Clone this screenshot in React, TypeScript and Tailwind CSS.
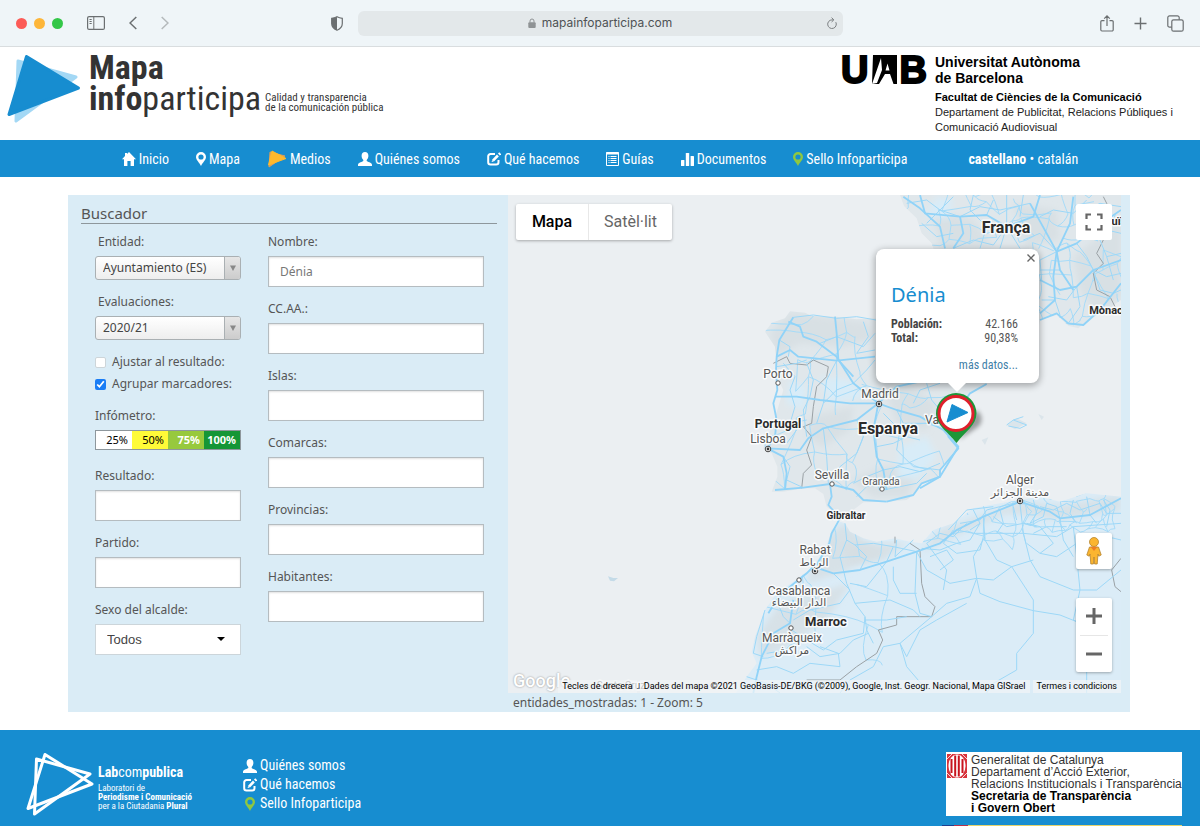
import type { ReactNode } from "react"

const CONDENSED = "font-['Roboto_Condensed','Liberation_Sans_Narrow',Roboto,sans-serif]"

function HomeIcon() {
  return (
    <svg viewBox="0 0 14 14" className="w-3.5 h-3.5 shrink-0" fill="currentColor" aria-hidden="true">
      <path d="M7 0 14 7.3h-2V14H8.6V9H5.4v5H2V7.3H0L3 4.1V1h2v1.1z" />
    </svg>
  )
}

function PinIcon({ className = "" }: { className?: string }) {
  return (
    <svg viewBox="0 0 10 14" className={`w-2.5 h-3.5 shrink-0 ${className}`} fill="currentColor" aria-hidden="true">
      <path
        fillRule="evenodd"
        d="M5 0a5 5 0 0 1 5 5c0 3-3.400 5.500-5 9C3.400 10.500 0 8 0 5a5 5 0 0 1 5-5zm0 2.400a2.600 2.600 0 1 0 0 5.200 2.600 2.600 0 0 0 0-5.200z"
      />
    </svg>
  )
}

function MediaIcon() {
  return (
    <svg viewBox="0 0 20 18" className="w-5 h-[18px] shrink-0" aria-hidden="true">
      <path d="M3 2 18 6 2 17z" fill="#d9a05a" stroke="#d9a05a" strokeLinejoin="round" />
      <path d="M5 1 19 8.500 1.500 15z" fill="#fdb92d" stroke="#fdb92d" strokeLinejoin="round" />
    </svg>
  )
}

function UserIcon() {
  return (
    <svg viewBox="0 0 14 14" className="w-3.5 h-3.5 shrink-0" fill="currentColor" aria-hidden="true">
      <path d="M7 0c2.200 0 3.400 1.600 3.400 3.800 0 1.700-.7 3.300-1.700 4.100v1.200c.3.900 5.300 1.300 5.300 3.700V14H0v-1.200c0-2.400 5-2.800 5.300-3.700V7.900c-1-.8-1.700-2.400-1.700-4.100C3.600 1.600 4.800 0 7 0z" />
    </svg>
  )
}

function EditIcon() {
  return (
    <svg viewBox="0 0 14 14" className="w-3.5 h-3.5 shrink-0" fill="none" stroke="currentColor" aria-hidden="true">
      <path d="M8 2H3.500A2.300 2.300 0 0 0 1.200 4.300v6A2.300 2.300 0 0 0 3.500 12.600h5.700a2.300 2.300 0 0 0 2.300-2.300V8" strokeWidth="2" />
      <path d="M6 8.600 10.900 3.500" strokeWidth="2.600" />
      <path d="m11.900 2.500 1.300-1.300" strokeWidth="2.600" />
      <path d="m4.600 10 .6-2 1.500 1.500z" fill="currentColor" stroke="none" />
    </svg>
  )
}

function ListIcon() {
  return (
    <svg viewBox="0 0 13 14" className="w-[13px] h-3.5 shrink-0" fill="none" stroke="currentColor" aria-hidden="true">
      <path d="M.5.5h12v13H.5z" />
      <path d="M0 1.500h13" strokeWidth="2" />
      <path d="M2.500 4.500h1m1 0h6m-8 2h1m1 0h6m-8 2h1m1 0h6m-8 2h1m1 0h6" />
    </svg>
  )
}

function StatsIcon() {
  return (
    <svg viewBox="0 0 13 14" className="w-[13px] h-3.5 shrink-0" fill="currentColor" aria-hidden="true">
      <rect x="0" y="8" width="3.400" height="6" rx=".6" />
      <rect x="4.800" y="1" width="3.400" height="13" rx=".6" />
      <rect x="9.600" y="4" width="3.400" height="10" rx=".6" />
    </svg>
  )
}

const NAV: { label: string; icon: ReactNode }[] = [
  { label: "Inicio", icon: <HomeIcon /> },
  { label: "Mapa", icon: <PinIcon /> },
  { label: "Medios", icon: <MediaIcon /> },
  { label: "Quiénes somos", icon: <UserIcon /> },
  { label: "Qué hacemos", icon: <EditIcon /> },
  { label: "Guías", icon: <ListIcon /> },
  { label: "Documentos", icon: <StatsIcon /> },
  { label: "Sello Infoparticipa", icon: <PinIcon className="text-[#8fc740]" /> },
]

function BrowserBar() {
  return (
    <div className="flex items-center h-[47px] bg-[#eff5f8] border-b border-[#d9dddf] px-4 text-[#6b6f71]">
      <div className="flex-1 flex items-center">
        <div className="flex items-center gap-[7px]">
          <span className="w-[11px] h-[11px] rounded-full bg-[#fc5b57]" />
          <span className="w-[11px] h-[11px] rounded-full bg-[#fdb63a]" />
          <span className="w-[11px] h-[11px] rounded-full bg-[#33c748]" />
        </div>
        <button aria-label="Barra lateral" className="ml-6">
          <svg viewBox="0 0 18 14" className="w-[18px] h-3.5" fill="none" stroke="currentColor">
            <rect x=".6" y=".6" width="16.800" height="12.800" rx="1.500" strokeWidth="1.200" />
            <path d="M6.800.6v12.800M2.500 3.500h2.200M2.500 5.500h2.200M2.500 7.500h2.200" />
          </svg>
        </button>
        <button aria-label="Atrás" className="ml-6">
          <svg viewBox="0 0 8 14" className="w-2 h-3.5" fill="none" stroke="currentColor" strokeWidth="1.500">
            <path d="M7.300 1 1 7l6.300 6" />
          </svg>
        </button>
        <button aria-label="Adelante" className="ml-6 text-[#b4b9bb]">
          <svg viewBox="0 0 8 14" className="w-2 h-3.5" fill="none" stroke="currentColor" strokeWidth="1.500">
            <path d="M.7 1 7 7 .7 13" />
          </svg>
        </button>
        <svg viewBox="0 0 12 15" className="w-3 h-[15px] ml-auto mr-[15px]" aria-hidden="true">
          <path d="M6 .8c1.800 1 3.500 1.400 5.300 1.500v5.200c0 3-2 5.300-5.300 6.700C2.700 12.800.7 10.500.7 7.500V2.300C2.500 2.200 4.200 1.800 6 .8z" fill="none" stroke="#6b6f71" strokeWidth="1.200" />
          <path d="M6 .8v13.400C2.700 12.800.7 10.500.7 7.500V2.300C2.500 2.200 4.200 1.800 6 .8z" fill="#6b6f71" />
        </svg>
      </div>
      <div className="relative flex items-center justify-center gap-1.5 w-[485px] h-[25px] rounded-md bg-[#e3e8ea] text-xs text-[#4e5254] font-[Inter,sans-serif]">
        <svg viewBox="0 0 8 10" className="w-2 h-2.5" aria-hidden="true">
          <rect x=".3" y="4.300" width="7.400" height="5.700" rx="1" fill="#8f9395" />
          <path d="M2 4.500V3a2 2 0 0 1 4 0v1.500" fill="none" stroke="#8f9395" />
        </svg>
        mapainfoparticipa.com
        <button aria-label="Recargar" className="absolute right-1.5 top-1.5">
          <svg viewBox="0 0 10 12" className="w-2.5 h-3" fill="none" stroke="#7b7f81">
            <path d="M8.800 5.200A4.300 4.300 0 1 1 5 2.900h1.500M4.600.6l2.200 2.300L4.600 5" />
          </svg>
        </button>
      </div>
      <div className="flex-1 flex items-center justify-end gap-5">
        <button aria-label="Compartir">
          <svg viewBox="0 0 14 17" className="w-3.5 h-[17px]" fill="none" stroke="currentColor" strokeWidth="1.200">
            <path d="M4.500 5.600H2a1.200 1.200 0 0 0-1.200 1.200v8A1.200 1.200 0 0 0 2 16h10a1.200 1.200 0 0 0 1.200-1.200v-8A1.200 1.200 0 0 0 12 5.600H9.500M7 11V1M4.200 3.700 7 .9l2.800 2.800" />
          </svg>
        </button>
        <button aria-label="Pestaña nueva">
          <svg viewBox="0 0 13 13" className="w-[13px] h-[13px]" fill="none" stroke="currentColor" strokeWidth="1.400">
            <path d="M6.500.5v12M.5 6.500h12" />
          </svg>
        </button>
        <button aria-label="Pestañas">
          <svg viewBox="0 0 17 17" className="w-[17px] h-[17px]" fill="none" stroke="currentColor" strokeWidth="1.200">
            <rect x="4.800" y="4.800" width="11.400" height="11.400" rx="1.800" />
            <path d="M4.800 12.200H2.600A1.800 1.800 0 0 1 .8 10.400V2.600A1.800 1.800 0 0 1 2.600.8h7.800a1.800 1.800 0 0 1 1.800 1.800v2.200" />
          </svg>
        </button>
      </div>
    </div>
  )
}

function Header() {
  return (
    <header className="flex justify-between h-[93px] bg-white pl-[7px] pr-6">
      <div className="flex">
        <svg viewBox="0 0 74 70" className="w-[74px] h-[70px] mt-[7px]" aria-hidden="true">
          <path d="M11 7 69 23 9 67z" fill="#a3d8f5" stroke="#a3d8f5" strokeWidth="3" strokeLinejoin="round" />
          <path d="M19.500 2.500 71.500 34 2 60.500z" fill="#178dd0" stroke="#178dd0" strokeWidth="3" strokeLinejoin="round" />
        </svg>
        <h1 className={`ml-2 mt-[5px] text-[34px] leading-[31px] text-[#333] ${CONDENSED}`}>
          <span className="block font-bold">Mapa</span>
          <span className="block"><b>info</b>participa</span>
        </h1>
        <p className={`ml-1 mt-[46px] text-[11px] leading-[10px] text-[#333] ${CONDENSED}`}>
          Calidad y transparencia
          <br />
          de la comunicación pública
        </p>
      </div>
      <div className="flex gap-2 font-['Liberation_Sans',sans-serif] text-black">
        <div className="flex gap-[3px] h-10 mt-[3px] text-[38px] leading-10 font-bold [-webkit-text-stroke:2px_#000]" aria-label="UAB">
          <span>U</span>
          <svg viewBox="0 0 25 29" className="w-[25px] h-[29px] mt-[5px]" aria-hidden="true">
            <path d="M1 0h24v29h-3.500L18 19h-5L7 29H0z" fill="#000" />
            <path d="M0 29 9 3l1 12L5 28zM13.500 15.500l2-7 2 7z" fill="#fff" />
          </svg>
          <span>B</span>
        </div>
        <div className="w-[241px] pt-[7px] whitespace-nowrap">
          <p className="text-sm leading-4 font-bold">Universitat Autònoma<br />de Barcelona</p>
          <p className="mt-1 text-[11px] leading-[15px] text-[#222]">
            <b className="text-black">Facultat de Ciències de la Comunicació</b>
            <br />
            Departament de Publicitat, Relacions Públiques i
            <br />
            Comunicació Audiovisual
          </p>
        </div>
      </div>
    </header>
  )
}

function Nav() {
  return (
    <nav className={`flex items-center justify-center gap-[27px] h-[37px] bg-[#178dd0] text-white text-sm whitespace-nowrap ${CONDENSED}`}>
      {NAV.map((item) => (
        <a key={item.label} href="#" className="flex items-center gap-[3px]">
          {item.icon}
          {item.label}
        </a>
      ))}
      <span className="ml-[34px]">
        <a href="#" className="font-bold">castellano</a> • <a href="#">catalán</a>
      </span>
    </nav>
  )
}

function TextField({ id, label, value }: { id: string; label: string; value?: string }) {
  return (
    <div className="flex flex-col gap-1">
      <label htmlFor={id} className="h-5 leading-5">{label}</label>
      <input
        id={id}
        type="text"
        defaultValue={value}
        className="w-full h-[31px] px-[11px] bg-white border border-[#b5bcc0] shadow-[inset_0_1px_2px_rgba(0,0,0,0.12)] text-[#777]"
      />
    </div>
  )
}

function ChosenSelect({ id, label, value }: { id: string; label: string; value: string }) {
  return (
    <div className="flex flex-col gap-1">
      <label htmlFor={id} className="h-5 leading-5 pl-[3px]">{label}</label>
      <div className="relative">
        <select
          id={id}
          className="block w-full h-6 pl-[7px] appearance-none rounded-[3px] border border-[#aab0b3] bg-linear-to-b from-white to-[#eee] text-[#444]"
        >
          <option>{value}</option>
        </select>
        <span className="pointer-events-none absolute right-px top-px bottom-px w-4 flex items-center justify-center rounded-r-[2px] border-l border-[#aab0b3] bg-linear-to-b from-[#e6e6e6] to-[#ccc]">
          <svg viewBox="0 0 6 6" className="w-1.5 h-1.5" fill="#888"><path d="M0 .5h6L3 6z" /></svg>
        </span>
      </div>
    </div>
  )
}

function SearchForm() {
  return (
    <form className="w-[440px] shrink-0 pl-[13px] pr-[11px] pt-2 text-xs text-[#555]">
      <h2 className="h-[21px] leading-[21px] text-[15px] border-b border-[#8e979c]">Buscador</h2>
      <div className="flex justify-between pt-2 pl-3.5 pr-[13px]">
        <div className="w-[146px] flex flex-col gap-3">
          <ChosenSelect id="entidad" label="Entidad:" value="Ayuntamiento (ES)" />
          <ChosenSelect id="evaluaciones" label="Evaluaciones:" value="2020/21" />
          <div className="-my-px whitespace-nowrap">
            <label className="flex items-center gap-1.5 h-[22px]">
              <input type="checkbox" className="w-[11px] h-[11px] appearance-none rounded-[2px] bg-white border border-[#cdd5d9]" />
              Ajustar al resultado:
            </label>
            <label className="flex items-center gap-1.5 h-[22px]">
              <input type="checkbox" defaultChecked className="w-[11px] h-[11px] accent-[#1a7df5]" />
              Agrupar marcadores:
            </label>
          </div>
          <div className="mb-1">
            <p className="h-5 leading-5 mb-1">Infómetro:</p>
            <div className="grid grid-cols-4 h-5 leading-[18px] border border-[#8e979c] text-[11px] text-right">
              <span className="pr-1 bg-white text-black">25%</span>
              <span className="pr-1 bg-[#fffb38] text-black">50%</span>
              <span className="pr-1 bg-[#97c93d] text-white font-bold">75%</span>
              <span className="pr-1 bg-[#159636] text-white font-bold">100%</span>
            </div>
          </div>
          <TextField id="resultado" label="Resultado:" />
          <TextField id="partido" label="Partido:" />
          <div className="flex flex-col gap-1">
            <label htmlFor="sexo" className="h-5 leading-5">Sexo del alcalde:</label>
            <div className="relative">
              <select id="sexo" className="block w-full h-[31px] pl-[11px] appearance-none bg-white border border-[#ccd5da] text-[13px] text-[#444] font-['Liberation_Sans',sans-serif]">
                <option>Todos</option>
              </select>
              <svg viewBox="0 0 8 4" className="pointer-events-none absolute right-4 top-[13px] w-2 h-1"><path d="M0 0h8L4 4z" /></svg>
            </div>
          </div>
        </div>
        <div className="w-[216px] flex flex-col gap-3">
          <TextField id="nombre" label="Nombre:" value="Dénia" />
          <TextField id="ccaa" label="CC.AA.:" />
          <TextField id="islas" label="Islas:" />
          <TextField id="comarcas" label="Comarcas:" />
          <TextField id="provincias" label="Provincias:" />
          <TextField id="habitantes" label="Habitantes:" />
        </div>
      </div>
    </form>
  )
}

const IBERIA =
  "M480 15 492 48 530 85 545 130 575 160 592 210 590 380 410 385 350 388 290 380 215 378 195 368 150 364 135 385 95 398 75 425 105 470 110 520 115 570 130 600 115 650 100 700 80 745 70 775 95 790 112 830 112 860 95 905 130 905 190 895 225 895 250 912 260 950 290 975 315 985 340 960 370 937 440 935 500 930 520 915 545 880 600 860 605 830 630 800 655 770 640 752 620 715 640 650 690 610 745 578 870 540 900 390 950 375 985 407 1015 415 1050 385 1090 368 1143 330V15z"

const AFRICA =
  "M300 995 315 1000 330 1025 370 1045 410 1055 465 1045 510 1055 545 1060 580 1020 640 1000 700 955 750 945 840 930 900 920 960 935 1040 910 1143 920V1520H-20L20 1460 50 1420 35 1385 45 1340 75 1260 110 1210 175 1165 220 1130 260 1070 275 1020z"

// darker relief laid over the land
const RELIEF = [
  "M150 370 250 380 380 395 400 450 300 470 180 460 110 500 90 430z",
  "M210 680 340 650 330 720 250 770 200 740z",
  "M380 480 500 580 590 640 560 720 470 700 420 560z",
  "M330 870 430 830 540 830 500 920 400 920z",
  "M260 1040 310 1000 400 1070 440 1090 300 1150 200 1180 220 1130z",
  "M120 1240 230 1210 330 1180 260 1290 120 1380 60 1400 50 1340z",
  "M300 1060 500 1060 430 1110 330 1120z",
  "M600 1020 840 935 960 945 1140 915 1143 960 960 990 800 970 640 1040 540 1090z",
  "M1000 200 1143 90 1143 320 1070 370 1020 300z",
  "M580 60 700 90 760 170 600 175z",
  "M820 40 950 60 960 150 860 170z",
]

const PALE = [
  "M150 570 200 590 190 660 140 640z",
  "M480 770 560 740 590 800 530 870 470 860z",
  "M590 20 640 30 620 90 560 70z",
  "M240 560 330 570 380 620 270 640z",
]

const MOTORWAYS = [
  "M160 382 118 450 110 500 108 540 112 600 100 640 110 690 105 740 82 775 130 800 140 850 135 900",
  "M145 395 180 410 190 440 230 455 290 500 340 580 415 640",
  "M110 500 150 480 175 500 290 512 405 500",
  "M285 380 290 430 295 510 340 560",
  "M108 620 170 620 240 630 330 640 415 640",
  "M82 775 180 780 205 745 250 715 350 690 415 640 400 720 410 800 430 840 440 900",
  "M415 640 470 660 540 680 610 720 655 770 600 860 540 895",
  "M415 640 470 590 560 570",
  "M105 900 190 893 270 882 340 900 370 930 440 935",
  "M270 882 275 920 265 945 300 985",
  "M740 582 690 610 650 670 625 740 655 775 600 840 600 860 545 880 520 915 440 935",
  "M220 1130 200 1150 150 1190 110 1230 85 1270",
  "M220 1130 280 1150 360 1140 440 1115 530 1085 600 1060 650 1020 730 980 840 935 930 965 960 985 1050 975 1143 925",
  "M300 985 275 1030 268 1060 230 1125",
  "M160 1230 150 1300 100 1330 65 1400 50 1460 40 1509",
  "M490 20 540 55 600 110 615 175",
  "M540 15 555 70 660 80 740 75 800 110 880 80 900 15",
  "M660 80 670 130 640 175",
  "M950 185 940 260 945 330 900 370",
  "M900 270 960 300 1010 290 1060 240 1143 210",
  "M950 185 1010 160 1070 110 1143 60",
  "M870 40 920 130 950 185 960 240 1000 300",
  "M1000 20 990 100 950 185",
  "M900 390 950 370 985 400 1030 405 1080 360 1143 280",
]

const ROADS = [
  "M118 450 150 470 145 500M160 382 220 375 290 385 350 380 408 390",
  "M240 460 290 440 370 470 405 430M370 395 385 440 350 490 405 480",
  "M130 520 165 560 150 600 165 650 150 700 200 690",
  "M200 520 220 570 210 620 190 660 200 740",
  "M110 530 170 520 200 510M290 512 260 570 250 640 230 700",
  "M340 580 380 540 405 510M340 580 290 600 250 640",
  "M250 715 260 800 265 880M350 690 370 740 350 790 300 830 270 882",
  "M430 670 480 720 470 780 520 830 600 840",
  "M470 660 490 700 560 700 620 720M520 640 540 600 600 580",
  "M560 580 575 630 600 660M410 770 460 760 500 740 540 750",
  "M130 800 150 830 140 870 190 893M100 700 60 710M140 760 170 720",
  "M430 840 380 860 340 880M430 840 480 830 540 845 600 820",
  "M430 900 480 890 530 880 560 850M350 920 380 890 440 870",
  "M800 705 820 690 860 705 840 715 805 708M820 690 850 680",
  "M500 40 560 30 600 60 640 20M560 100 600 60 660 80M545 100 590 140 640 130",
  "M700 15 690 60 740 110 720 175M740 75 760 30M800 15 800 110 780 175",
  "M640 175 700 150 760 165 800 110 840 175M660 80 720 50 780 60 870 40",
  "M900 80 940 60 1000 70 1040 30M850 150 900 130 950 185M840 80 850 15",
  "M950 185 900 210 905 270M960 240 900 240M1010 160 1040 200 1060 240",
  "M1060 240 1100 260 1143 250M1060 240 1080 300 1120 310 1143 300M1010 290 1020 350 985 400",
  "M1040 60 1080 40 1143 50M1040 60 1060 110M1100 120 1143 130M1080 150 1100 200 1143 190M1100 200 1120 270",
  "M925 320 980 330 1010 290M905 330 945 330 960 375",
  "M315 1000 320 1050 345 1065 400 1060 460 1070 530 1085",
  "M320 1050 300 1100 310 1140M345 1065 380 1100 360 1140M440 1115 460 1070M470 1050 465 1100 520 1050",
  "M310 1140 320 1180 345 1240 375 1280 380 1320 400 1360",
  "M280 1150 330 1200 300 1240 210 1260 160 1290M330 1180 380 1190 440 1115",
  "M345 1240 450 1230 520 1260 540 1280M460 1130 460 1170 480 1210 530 1210",
  "M530 1085 525 1210 540 1270 575 1280M530 1085 560 1140 630 1180 710 1165",
  "M375 1280 370 1330 290 1350 250 1380 200 1350 155 1320M375 1290 440 1290 500 1280",
  "M80 1390 140 1380 190 1350M50 1440 110 1430 160 1450 210 1420 300 1430 295 1390 240 1370",
  "M110 1230 130 1280 150 1300M75 1260 50 1340 40 1390 70 1400",
  "M20 1460 80 1480 120 1509M200 1370 240 1400 300 1390 340 1350 385 1330",
  "M640 1020 610 1060 650 1090 720 1080 730 1040M730 980 735 1050 770 1110 815 1130 880 1110",
  "M735 1040 700 1100 710 1165 720 1210 780 1235 880 1262 960 1275 1010 1295",
  "M710 1165 690 1220 620 1240 575 1280 480 1360 500 1430 560 1500",
  "M710 1165 760 1170 815 1130 880 1230 880 1330 830 1390 830 1440 760 1480 740 1509",
  "M480 1360 430 1370 400 1430 330 1470 300 1509M480 1360 500 1400 540 1320 590 1290 680 1240",
  "M840 940 850 1030 870 1110 900 1160 1000 1200 1070 1200 1143 1140",
  "M650 1020 700 1030 850 1030 950 1040 1000 1010 1143 1000",
  "M1000 1010 1010 1100 1020 1200 1000 1290 1040 1310 1040 1509",
  "M570 1100 620 1080 640 1110 600 1140M560 1060 590 1100 620 1140 610 1200",
  "M625 1020 680 960 760 950M660 1000 720 990 740 960 840 935M700 960 720 1000 690 1020",
  "M860 1000 900 1010 940 1060 900 1090 860 1060M960 985 970 1050 1000 1100",
  "M560 1060 600 1030 640 1040 680 1000M545 1075 600 1080 650 1060 690 1050 720 1000",
  "M880 930 890 970 870 1000 910 980 920 940 950 950 960 985M1000 930 990 970 1010 1000M1040 920 1050 975 1070 1000",
  "M900 950 940 960 980 940 1020 960 1080 940 1100 970 1143 970M1090 930 1110 960 1100 1010M880 1030 920 1010 980 1010",
  "M760 980 800 1010 850 1000 890 1010M780 960 790 1000 770 1030M820 950 830 990",
  "M1010 1060 1060 1030 1143 1050M900 1090 950 1100 1010 1060",
]

const BORDERS = [
  "M100 520 140 500 150 520 200 525 220 510 265 530 260 560 230 590 220 650 215 700 190 710 215 740 200 780 215 825 190 850 185 895",
  "M510 1060 540 1080 545 1180 555 1220 585 1250 575 1280 470 1280 470 1305 415 1320 428 1350 410 1390 350 1430 300 1470 200 1470",
  "M1090 20 1110 60 1095 140 1070 190 1090 220 1060 250 1070 300 1110 320 1125 350",
  "M465 1040V1060M1143 1105 1115 1140 1125 1190 1143 1205",
]

// Irregular mesh of local roads over a box, the same on every render.
function mesh(x0: number, y0: number, x1: number, y1: number, step: number, seed: number) {
  let s = seed
  const rand = () => {
    s = (s * 16807) % 2147483647
    return s / 2147483647
  }
  const rows: [number, number][][] = []
  for (let y = y0; y <= y1; y += step) {
    const row: [number, number][] = []
    for (let x = x0; x <= x1; x += step) {
      row.push([Math.round(x + (rand() - 0.5) * step), Math.round(y + (rand() - 0.5) * step)])
    }
    rows.push(row)
  }
  const link = (a: [number, number], b: [number, number]) => {
    const cx = Math.round((a[0] + b[0]) / 2 + (rand() - 0.5) * step * 0.5)
    const cy = Math.round((a[1] + b[1]) / 2 + (rand() - 0.5) * step * 0.5)
    return `M${a[0]} ${a[1]}Q${cx} ${cy} ${b[0]} ${b[1]}`
  }
  let d = ""
  rows.forEach((row, j) =>
    row.forEach((p, i) => {
      if (row[i + 1] && rand() < 0.72) d += link(p, row[i + 1])
      if (rows[j + 1] && rand() < 0.72) d += link(p, rows[j + 1][i])
    }),
  )
  return d
}

const LOCAL_ROADS = [
  mesh(480, 10, 1150, 180, 48, 11),
  mesh(900, 180, 1150, 410, 46, 23),
  mesh(80, 370, 420, 920, 72, 37),
  mesh(400, 590, 660, 930, 70, 41),
  mesh(860, 910, 1150, 1020, 27, 53),
  mesh(560, 940, 860, 1090, 42, 67),
  mesh(60, 1000, 500, 1420, 95, 71),
]

type Label = { text: string; x: number; y: number; size: number; bold?: boolean }

const LABELS: Label[] = [
  { text: "França", x: 498, y: 38, size: 16, bold: true },
  { text: "Mònac", x: 598, y: 119, size: 11, bold: true },
  { text: "uïs", x: 611, y: 30, size: 11, bold: true },
  { text: "Espanya", x: 380, y: 239, size: 16, bold: true },
  { text: "Portugal", x: 270, y: 233, size: 12, bold: true },
  { text: "Marroc", x: 318, y: 431, size: 13, bold: true },
  { text: "Gibraltar", x: 338, y: 324, size: 10, bold: true },
  { text: "Porto", x: 270, y: 183, size: 12 },
  { text: "Lisboa", x: 260, y: 248, size: 12 },
  { text: "Madrid", x: 372, y: 203, size: 12 },
  { text: "Va", x: 424, y: 229, size: 12 },
  { text: "Sevilla", x: 324, y: 284, size: 12 },
  { text: "Granada", x: 373, y: 290, size: 10 },
  { text: "Alger", x: 512, y: 289, size: 12 },
  { text: "مدينة الجزائر", x: 512, y: 301, size: 11 },
  { text: "Rabat", x: 307, y: 359, size: 12 },
  { text: "الرباط", x: 306, y: 371, size: 11 },
  { text: "Casablanca", x: 291, y: 400, size: 12 },
  { text: "الدار البيضاء", x: 291, y: 411, size: 11 },
  { text: "Marràqueix", x: 284, y: 447, size: 12 },
  { text: "مراكش", x: 284, y: 459, size: 11 },
  { text: "Santa Cruz", x: 113, y: 494, size: 10 },
]

const TOWNS = [[270, 188], [324, 289], [374, 294], [291, 385], [283, 433]]
const CAPITALS = [[260, 254], [371, 209], [512, 306], [307, 376]]

function MapCanvas() {
  return (
    <svg viewBox="0 0 613 498" preserveAspectRatio="xMidYMid slice" className="absolute inset-0 w-full h-full font-[Roboto,'Noto_Sans','DejaVu_Sans',sans-serif]" role="img" aria-label="Mapa">
      <defs>
        <clipPath id="land"><path d={IBERIA} /><path d={AFRICA} /></clipPath>
        <filter id="soft"><feGaussianBlur stdDeviation="9" /></filter>
      </defs>
      <rect width="613" height="498" fill="#ebeff2" />
      <g transform="translate(232 -5) scale(0.33333)" fill="none" strokeLinejoin="round">
        <path d={IBERIA} fill="#e0e7eb" />
        <path d={AFRICA} fill="#dbecf7" />
        <g clipPath="url(#land)">
          {RELIEF.map((d) => <path key={d} d={d} fill="#d5dde2" fillOpacity="0.75" filter="url(#soft)" />)}
          {PALE.map((d) => <path key={d} d={d} fill="#d8ecf8" filter="url(#soft)" />)}
          {LOCAL_ROADS.map((d) => <path key={d} d={d} stroke="#a6dbf8" strokeWidth="3" />)}
        </g>
        <path d="M-396 1159-390 1172-378 1174-366 1164-380 1164z" fill="#c4dbe8" />
        <path d="M800 705 830 685 860 700 825 718zM895 672 912 680 905 690zM725 750 745 742 735 765z" fill="#dbe5eb" />
        {BORDERS.map((d) => <path key={d} d={d} stroke="#9aa1a5" strokeWidth="3" />)}
        {ROADS.map((d) => <path key={d} d={d} stroke="#9dd8f8" strokeWidth="3" />)}
        {MOTORWAYS.map((d) => <path key={d} d={d} stroke="#90d3f8" strokeWidth="5.500" />)}
      </g>
      {TOWNS.map(([x, y]) => <circle key={x} cx={x} cy={y} r="2.200" fill="#fff" stroke="#555" />)}
      {CAPITALS.map(([x, y]) => (
        <g key={x}>
          <circle cx={x} cy={y} r="2.800" fill="#fff" stroke="#444" />
          <circle cx={x} cy={y} r="1.400" fill="#333" />
        </g>
      ))}
      {LABELS.map((l) => (
        <text
          key={l.text}
          x={l.x}
          y={l.y}
          fontSize={l.size}
          fontWeight={l.bold ? 700 : 400}
          textAnchor="middle"
          fill={l.bold ? "#2b2b2b" : "#555"}
          stroke="#fff"
          strokeWidth="3"
          strokeOpacity="0.8"
          strokeLinejoin="round"
          paintOrder="stroke"
        >
          {l.text}
        </text>
      ))}
    </svg>
  )
}

function InfoWindow() {
  return (
    <div className={`absolute left-[368px] top-[54px] w-[163px] h-[134px] rounded-lg bg-white px-[15px] pt-[33px] shadow-[0_2px_7px_1px_rgba(0,0,0,0.3)] text-xs text-[#555] ${CONDENSED}`}>
      <button aria-label="Cerrar" className="absolute right-1 top-[5px]">
        <svg viewBox="0 0 8 8" className="w-2 h-2" stroke="#666" strokeWidth="1.400"><path d="M.5.5l7 7M7.500.5l-7 7" /></svg>
      </button>
      <h3 className="text-xl leading-[26px] text-[#178dd0] font-['Noto_Sans',sans-serif]">Dénia</h3>
      <dl className="grid grid-cols-2 mt-[9px] pr-1.5 leading-3.5">
        <dt className="font-bold text-[#444]">Población:</dt>
        <dd className="text-right">42.166</dd>
        <dt className="font-bold text-[#444]">Total:</dt>
        <dd className="text-right">90,38%</dd>
      </dl>
      <a href="#" className="block mt-3 pr-1.5 text-right text-[#4180a8]">más datos...</a>
      <span className="absolute left-[71px] top-[133px] w-5 h-2.5 bg-white [clip-path:polygon(0_0,100%_0,50%_100%)]" />
    </div>
  )
}

function Marker() {
  return (
    <svg viewBox="0 0 52 54" className="absolute left-[427px] top-[197px] w-[52px] h-[54px]" aria-hidden="true">
      <path d="M24 48 44 34Q50 26 42 18z" fill="#000" fillOpacity="0.35" className="blur-[2px]" />
      <path d="M21 1a20.500 20.500 0 0 1 20.500 20.500C41.500 33 30 40 21.500 51 13 40 1 33 1 21.500A20.500 20.500 0 0 1 21 1z" fill="#1d9638" />
      <circle cx="21" cy="21.500" r="17" fill="#fff" stroke="#e0202c" strokeWidth="3" />
      <path d="M17 12.500 33 20.500 12 30z" fill="#178dd0" stroke="#178dd0" strokeLinejoin="round" />
    </svg>
  )
}

function MapPanel() {
  return (
    <div className="flex-1 min-w-0 pr-[9px]">
      <div className="relative h-[498px] overflow-hidden font-[Roboto,sans-serif]">
        <MapCanvas />
        <div className="absolute left-2 top-[9px] flex h-9 rounded-[2px] bg-white shadow-[0_1px_3px_rgba(0,0,0,0.3)] text-base">
          <button className="w-[73px] border-r border-[#e8e8e8] font-medium text-black">Mapa</button>
          <button className="w-[83px] text-[#666]">Satèl·lit</button>
        </div>
        <button aria-label="Pantalla completa" className="absolute right-[9px] top-[9px] w-9 h-9 flex items-center justify-center rounded-[2px] bg-white">
          <svg viewBox="0 0 18 18" className="w-[18px] h-[18px]" fill="none" stroke="#666" strokeWidth="2.200">
            <path d="M1.500 6V1.500H6M12 1.500h4.500V6M16.500 12v4.500H12M6 16.500H1.500V12" />
          </svg>
        </button>
        <Marker />
        <InfoWindow />
        <button aria-label="Street View" className="absolute right-[9px] top-[338px] w-9 h-9 flex items-center justify-center rounded-[2px] bg-white shadow-[0_1px_3px_rgba(0,0,0,0.3)]">
          <svg viewBox="0 0 16 28" className="w-4 h-7" fill="#fbb52f" stroke="#b5842f" strokeWidth=".8">
            <path d="M3.500 10h9l2.700 8-2.400 1.200L12 17l-.8 10H8.600L8 20l-.6 7H4.800L4 17l-.8 2.200L.8 18z" />
            <circle cx="8" cy="5" r="4.500" />
            <path d="M4.500 9.800h7L8 14z" fill="#ef7d24" stroke="none" />
          </svg>
        </button>
        <div className="absolute right-[9px] top-[403px] w-9 h-[74px] flex flex-col items-center rounded-[2px] bg-white shadow-[0_1px_3px_rgba(0,0,0,0.3)]">
          <button aria-label="Acercar" className="w-9 flex-1 flex items-center justify-center">
            <svg viewBox="0 0 16 16" className="w-4 h-4" stroke="#666" strokeWidth="3"><path d="M8 0v16M0 8h16" /></svg>
          </button>
          <span className="w-7 h-px bg-[#e6e6e6]" />
          <button aria-label="Alejar" className="w-9 flex-1 flex items-center justify-center">
            <svg viewBox="0 0 16 16" className="w-4 h-4" stroke="#666" strokeWidth="3"><path d="M0 8h16" /></svg>
          </button>
        </div>
        <span className="absolute left-[5px] bottom-0.5 text-lg leading-5 font-medium text-white [text-shadow:0_0_2px_#888]">Google</span>
        <div className="absolute right-0 bottom-0 flex h-[13px] gap-[3px] text-[9px] leading-[13px] text-black whitespace-nowrap">
          <button className="px-1 bg-[#f2f5f7]/70">Tecles de drecera</button>
          <span className="px-1 bg-[#f2f5f7]/70">Dades del mapa ©2021 GeoBasis-DE/BKG (©2009), Google, Inst. Geogr. Nacional, Mapa GISrael</span>
          <a href="#" className="px-1 bg-[#f2f5f7]/70">Termes i condicions</a>
        </div>
      </div>
      <p className="pl-[5px] h-[19px] leading-[19px] text-xs text-[#555]">entidades_mostradas: 1 - Zoom: 5</p>
    </div>
  )
}

function Footer() {
  return (
    <footer className="flex justify-between h-24 overflow-hidden bg-[#178dd0] pl-[25px] pr-[18px] pt-[22px] text-white">
      <div className="flex">
        <div className="flex w-[218px]">
          <svg viewBox="0 0 70 66" className="w-[70px] h-[66px] shrink-0" fill="none" stroke="#fff" strokeWidth="3" strokeLinejoin="round" aria-hidden="true">
            <path d="M20 2.500 67 32 3 56.500z" />
            <path d="M11.500 7 65 22 9.500 62z" />
          </svg>
          <div className={`ml-[3px] mt-3 whitespace-nowrap ${CONDENSED}`}>
            <p className="text-sm leading-4"><b>Lab</b>com<b>publica</b></p>
            <p className="mt-1 text-[9px] leading-[9px]">
              Laboratori de
              <br />
              <b>Periodisme i Comunicació</b>
              <br />
              per a la Ciutadania <b>Plural</b>
            </p>
          </div>
        </div>
        <ul className={`mt-1 text-sm leading-[19px] ${CONDENSED}`}>
          <li><a href="#" className="flex items-center gap-[3px]"><UserIcon />Quiénes somos</a></li>
          <li><a href="#" className="flex items-center gap-[3px]"><EditIcon />Qué hacemos</a></li>
          <li><a href="#" className="flex items-center gap-[3px]"><span className="flex w-3.5 justify-center"><PinIcon className="text-[#8fc740]" /></span>Sello Infoparticipa</a></li>
        </ul>
      </div>
      <div className="w-[240px]">
        <div className="ml-1 flex gap-1 h-16 px-px pt-0.5 bg-white text-xs leading-3 text-[#333] whitespace-nowrap font-['Liberation_Sans',sans-serif]">
          <svg viewBox="0 0 20 24" className="w-5 h-6 shrink-0" aria-hidden="true">
            <rect width="20" height="24" fill="#d9343c" />
            <ellipse cx="10" cy="12" rx="8.500" ry="11.500" fill="#fff" />
            <path d="M4.500 5v14M8.200 1.500v21M11.800 1.500v21M15.500 5v14" stroke="#c8141e" strokeWidth="2" />
            <path d="M0 5 5 0M20 5 15 0M0 19l5 5M20 19l-5 5" stroke="#fff" strokeWidth=".8" />
          </svg>
          <p>
            Generalitat de Catalunya
            <br />
            Departament d’Acció Exterior,
            <br />
            Relacions Institucionals i Transparència
            <br />
            <b className="text-black">Secretaria de Transparència</b>
            <br />
            <b className="text-black">i Govern Obert</b>
          </p>
        </div>
        <div className="mt-[9px] flex h-10">
          <span className="w-3 bg-[#1f3f8f]" />
          <span className="w-3.5 bg-[#b8324a]" />
          <span className="flex-1 bg-[#e6d36a]" />
        </div>
      </div>
    </footer>
  )
}

export default function App() {
  return (
    <div className="bg-white">
      <BrowserBar />
      <Header />
      <Nav />
      <main className="flex ml-[68px] mr-[70px] my-[18px] bg-[#daecf6] font-['Noto_Sans','Open_Sans',sans-serif]">
        <SearchForm />
        <MapPanel />
      </main>
      <Footer />
    </div>
  )
}
